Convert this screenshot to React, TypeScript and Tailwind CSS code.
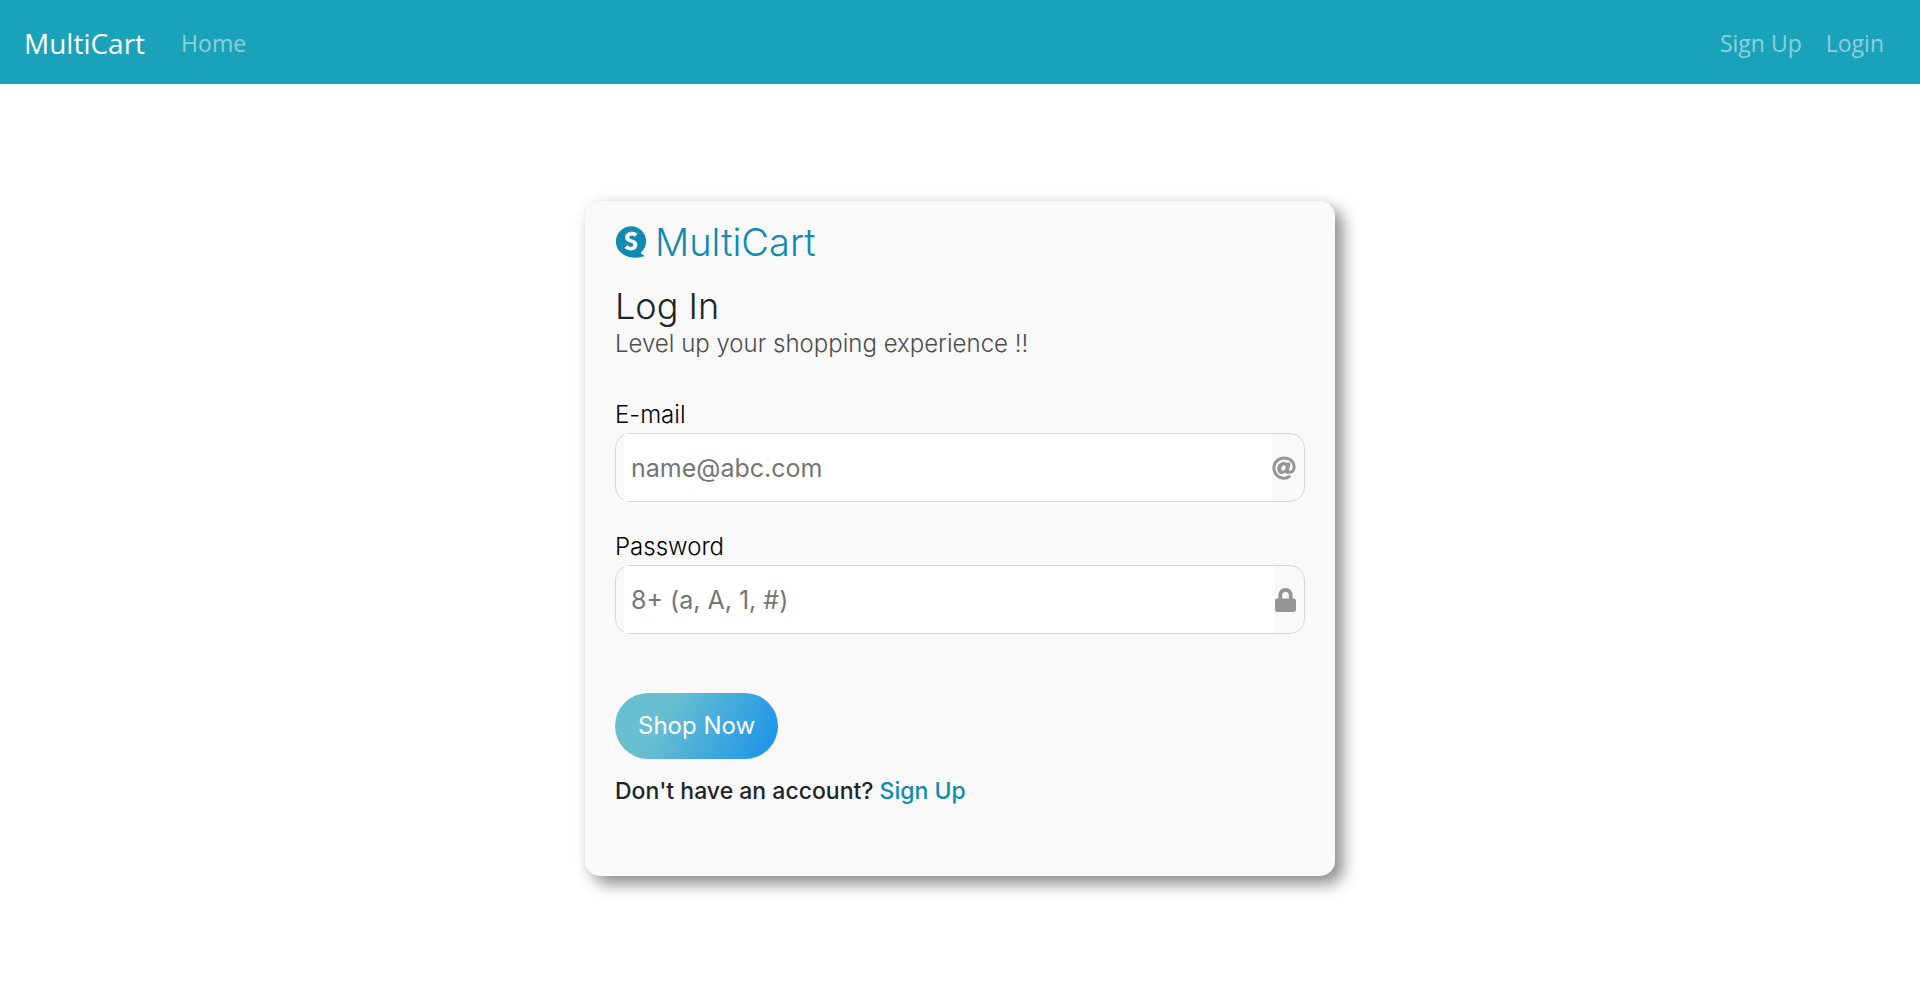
import type { ReactNode } from "react";
import { FaAt, FaLock, FaSpeakap } from "react-icons/fa";

type FieldProps = {
  id: string;
  label: string;
  type: string;
  placeholder: string;
  icon: ReactNode;
};

function Field({ id, label, type, placeholder, icon }: FieldProps) {
  return (
    <div className="flex flex-col">
      <label htmlFor={id} className="text-2xl leading-9 font-[350] text-black">
        {label}
      </label>
      <div className="flex h-[69px] items-center rounded-[15px] border border-[#d9d9d9] px-2 text-2xl text-[#959595]">
        <input
          id={id}
          type={type}
          placeholder={placeholder}
          className="h-full min-w-0 flex-1 bg-white px-[7px] text-[25px] text-[#212529] outline-none placeholder:text-[#757575]"
        />
        {icon}
      </div>
    </div>
  );
}

function NavBar() {
  return (
    <nav className="flex h-[84px] items-center bg-[#19a2b9] px-6 pt-0.5 font-['Open_Sans','Noto_Sans',sans-serif] text-[23px] text-white/50">
      <a href="#" className="mr-9 text-[28px] text-white">
        MultiCart
      </a>
      <a href="#home">Home</a>
      <div className="mr-3 ml-auto flex gap-6">
        <a href="#signup">Sign Up</a>
        <a href="#login">Login</a>
      </div>
    </nav>
  );
}

export default function App() {
  return (
    <div className="min-h-screen bg-white">
      <NavBar />
      <main className="flex justify-center px-4 pt-[117px] pb-12 font-['Inter','Open_Sans',sans-serif]">
        <form
          className="w-full max-w-[750px] rounded-[15px] bg-[#f9f9f9] px-[30px] pt-[17px] pb-[65px] font-light text-[#212529] shadow-[8px_8px_16px_rgba(0,0,0,0.44),0_0_16px_rgba(0,0,0,0.05)]"
          onSubmit={(e) => e.preventDefault()}
        >
          <div className="flex h-12 items-center gap-2 text-[38px] text-[#118ab2]">
            <FaSpeakap className="h-9 w-8" />
            <span>MultiCart</span>
          </div>
          <h1 className="mt-4 text-4xl leading-[48px]">Log In</h1>
          <p className="text-2xl leading-7 text-[#4d4d4d]">Level up your shopping experience !!</p>

          <div className="mt-[39px] flex flex-col gap-[27px] font-normal">
            <Field id="email" label="E-mail" type="email" placeholder="name@abc.com" icon={<FaAt />} />
            <Field id="password" label="Password" type="password" placeholder="8+ (a, A, 1, #)" icon={<FaLock className="w-[21px]" />} />
          </div>

          <button
            type="submit"
            className="mt-[59px] h-[66px] rounded-full bg-[linear-gradient(120deg,#68bfd0_30%,#2196e8_92%)] px-[23px] text-2xl font-normal text-white"
          >
            Shop Now
          </button>
          <p className="mt-3 text-[23px] leading-10 font-medium">
            Don't have an account?{" "}
            <a href="#signup" className="text-[#118ab2]">
              Sign Up
            </a>
          </p>
        </form>
      </main>
    </div>
  );
}
